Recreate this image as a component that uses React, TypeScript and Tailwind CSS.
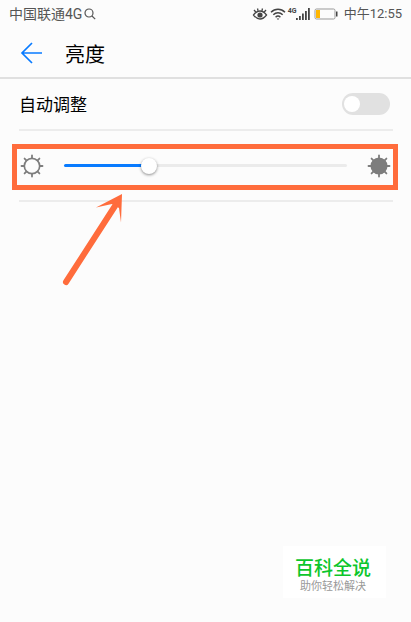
import { useState } from "react";

const rays = [0, 45, 90, 135, 180, 225, 270, 315];

function Sun({ filled = false }: { filled?: boolean }) {
  return (
    <svg viewBox="0 0 24 24" className="h-6 w-6 shrink-0" aria-hidden="true">
      <circle
        cx="12"
        cy="12"
        r="7.700"
        fill={filled ? "#7d7d7d" : "none"}
        stroke="#7d7d7d"
        strokeWidth="1.7"
      />
      {rays.map((angle) => (
        <path
          key={angle}
          d="M12 4V1.500"
          stroke="#7d7d7d"
          strokeWidth="1.8"
          strokeLinecap="round"
          transform={`rotate(${angle} 12 12)`}
        />
      ))}
    </svg>
  );
}

function StatusBar() {
  return (
    <div className="flex h-7 items-center justify-between pr-[9px] pl-[9px] text-[#555]">
      <div className="flex items-center gap-0.5">
        <span className="text-[14px] leading-5">中国联通4G</span>
        <svg viewBox="0 0 12 12" className="h-3 w-3" fill="none" stroke="#555" strokeWidth="1.2">
          <circle cx="5" cy="5" r="4" />
          <path d="M8 8l3.2 3.2" />
        </svg>
      </div>
      <div className="flex items-center">
        <svg viewBox="0 0 16 14" className="h-[14px] w-4" fill="none" stroke="#444" strokeWidth="1.3">
          <path d="M1.5 8C4 4.600 6 4 8 4s4 .6 6.500 4c-2.500 3.300-4.500 4-6.500 4s-4-.7-6.500-4z" />
          <path d="M2 3l1.800 2M5.500 1.500l.6 2.300M10.500 1.500l-.6 2.300M14 3l-1.800 2" />
          <circle cx="8" cy="8" r="2.600" fill="#444" stroke="none" />
        </svg>
        <svg viewBox="0 0 16 14" className="ml-0.5 h-[14px] w-4" fill="none" stroke="#444" strokeWidth="1.5">
          <path d="M1 5.200c4-4 10-4 14 0M3.300 7.800c2.700-2.600 6.700-2.600 9.400 0M5.600 10.200c1.400-1.300 3.400-1.300 4.800 0" />
          <path d="M6.700 11.500h2.600L8 13z" fill="#444" stroke="none" />
        </svg>
        <span className="ml-0.5 self-start text-[7px] leading-[14px] font-bold text-[#444]">4G</span>
        <svg viewBox="0 0 14 12" className="-ml-px h-3 w-[14px]" fill="#444">
          <path d="M0 10h1.800v2H0zM3 8h1.800v4H3zM6 5.500h1.800V12H6zM9 3h1.800v9H9zM12 0h1.800v12H12z" />
        </svg>
        <svg viewBox="0 0 24 12" className="ml-1 h-3 w-6">
          <rect x="1" y="1" width="20" height="10" rx="1.500" fill="#fcfcfc" stroke="#999" />
          <rect x="2" y="2" width="4" height="8" fill="#ffb600" />
          <path d="M22 3.500h1.500v5H22z" fill="#444" />
        </svg>
        <span className="ml-1.5 text-[13px] leading-5">中午12:55</span>
      </div>
    </div>
  );
}

function BrightnessSlider() {
  const [level, setLevel] = useState(29);

  return (
    <div className="relative mr-[13px] ml-3 flex h-[46px] items-center border-5 border-[#ff6c3c] pr-0.5 pb-[3px] pl-[3px]">
      <Sun />
      <input
        type="range"
        aria-label="亮度"
        value={level}
        onChange={(e) => setLevel(Number(e.target.value))}
        style={{
          backgroundImage: `linear-gradient(to right, #087bff ${level}%, #ebebeb ${level}%)`,
        }}
        className="mr-5 ml-5 h-[3px] min-w-0 flex-1 appearance-none rounded-full [&::-webkit-slider-thumb]:h-4 [&::-webkit-slider-thumb]:w-4 [&::-webkit-slider-thumb]:appearance-none [&::-webkit-slider-thumb]:rounded-full [&::-webkit-slider-thumb]:bg-white [&::-webkit-slider-thumb]:shadow-[0_1px_3px_rgba(0,0,0,0.45)]"
      />
      <Sun filled />
      <svg
        viewBox="0 0 66 96"
        className="absolute top-[43px] left-[43px] h-24 w-[66px]"
        aria-hidden="true"
      >
        <path d="M6 90L55 14" stroke="#ff6c3c" strokeWidth="6" strokeLinecap="round" />
        <path d="M62 2L36 15.500l16-3.500 7 4 2 14.500z" fill="#ff6c3c" />
      </svg>
    </div>
  );
}

export default function App() {
  const [auto, setAuto] = useState(false);

  return (
    <div className="flex min-h-screen flex-col bg-[#fcfcfc] font-['Roboto','Noto_Sans_CJK_SC',sans-serif]">
      <StatusBar />
      <header className="flex h-[51px] items-center border-b-2 border-[#e0e0e0] pl-5">
        <button type="button" aria-label="返回">
          <svg viewBox="0 0 24 22" className="h-[22px] w-6" fill="none" stroke="#087bff" strokeWidth="1.700">
            <path d="M22 11H2M12 1L2 11l10 10" />
          </svg>
        </button>
        <h1 className="ml-[21px] pt-1 text-[20px] leading-7 text-black">亮度</h1>
      </header>

      <main className="flex-1">
        <div className="mr-[18px] ml-[19px] flex h-[52px] items-center justify-between border-b-2 border-[#ececec] pr-[3px]">
          <label htmlFor="auto" className="pt-0.5 text-[17px] leading-6 text-black">
            自动调整
          </label>
          <button
            id="auto"
            type="button"
            role="switch"
            aria-checked={auto}
            onClick={() => setAuto(!auto)}
            className={`flex h-[22px] w-12 items-center rounded-full px-0.5 ${
              auto ? "justify-end bg-[#087bff]" : "bg-[#e1e1e1]"
            }`}
          >
            <span className="h-4 w-4 rounded-full bg-white" />
          </button>
        </div>

        <div className="mr-[18px] ml-[19px] border-b-2 border-[#ececec] pt-[13px] pb-2.5">
          <div className="-mr-[18px] -ml-[19px]">
            <BrightnessSlider />
          </div>
        </div>
      </main>

      <footer className="mr-[25px] mb-6 self-end bg-white pt-[11px] pr-[15px] pb-[5px] pl-3 text-center">
        <p className="text-[19px] leading-6 font-medium text-[#0cc62c]">百科全说</p>
        <p className="text-[11px] leading-3 text-[#999]">助你轻松解决</p>
      </footer>
    </div>
  );
}
